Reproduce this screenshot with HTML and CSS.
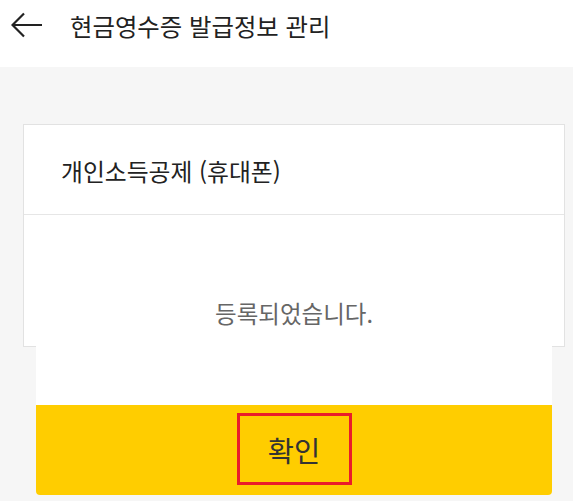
FILE: index.html
```html
<!DOCTYPE html>
<html lang="ko">
<head>
<meta charset="utf-8">
<title>현금영수증 발급정보 관리</title>
<link rel="stylesheet" href="styles.css">
</head>
<body>
<div class="page">
  <header class="topbar">
    <div class="topbar-row">
      <svg class="back" width="32" height="26" viewBox="0 0 32 26" aria-hidden="true">
        <path d="M1.5 13 H31 M13 1.5 L1.5 13 L13 24.5" fill="none" stroke="#222" stroke-width="2.2" stroke-linecap="butt" stroke-linejoin="miter"/>
      </svg>
      <h1 class="title">현금영수증 발급정보 관리</h1>
    </div>
  </header>
  <main class="content">
    <section class="card">
      <div class="card-head">개인소득공제 (휴대폰)</div>
      <div class="card-body"></div>
    </section>
  </main>
  <div class="dialog">
    <div class="dialog-msg">등록되었습니다.</div>
    <button class="dialog-btn"><span class="btn-label">확인</span></button>
  </div>
</div>
</body>
</html>
```
FILE: styles.css
```css
* { box-sizing: border-box; }
html, body { margin: 0; padding: 0; }
body {
  font-family: "Noto Sans CJK KR", "Noto Sans", sans-serif;
  color: #222;
  background: #f6f6f6;
}
.page {
  position: relative;
  height: 501px;
  display: flex;
  flex-direction: column;
  overflow: hidden;
}
.topbar {
  height: 67px;
  background: #fff;
  flex: none;
}
.topbar-row {
  height: 50px;
  display: flex;
  align-items: center;
  padding-left: 11px;
}
.back { display: block; flex: none; }
.title {
  margin: 0 0 0 27px;
  font-size: 24.4px;
  font-weight: 400;
  color: #222;
  line-height: 1;
  padding-top: 2px;
  letter-spacing: 0;
}
.content {
  flex: 1;
  background: #f6f6f6;
  padding: 57px 8px 0 23px;
}
.card {
  background: #fff;
  border: 1px solid #e2e2e2;
}
.card-head {
  height: 90px;
  display: flex;
  align-items: center;
  padding: 2px 0 0 37px;
  font-size: 23.8px;
  color: #222;
  border-bottom: 1px solid #e6e6e6;
}
.card-body {
  height: 131px;
}
.dialog {
  position: absolute;
  left: 36px;
  top: 227px;
  width: 516px;
  height: 268px;
  background: #fff;
  display: flex;
  flex-direction: column;
  border-radius: 0 0 4px 4px;
}
.dialog-msg {
  flex: 1;
  display: flex;
  align-items: center;
  justify-content: center;
  font-size: 23.5px;
  color: #666;
  padding-bottom: 6px;
}
.dialog-btn {
  height: 90px;
  flex: none;
  border: 0;
  margin: 0;
  padding: 0;
  background: #ffcd00;
  border-radius: 0 0 4px 4px;
  display: flex;
  align-items: center;
  justify-content: center;
  font-family: inherit;
  cursor: pointer;
}
.btn-label {
  width: 115px;
  height: 72px;
  border: 3px solid #ea1c2a;
  display: flex;
  align-items: center;
  justify-content: center;
  font-size: 28.5px;
  color: #333;
  margin-top: -2px;
}
```
